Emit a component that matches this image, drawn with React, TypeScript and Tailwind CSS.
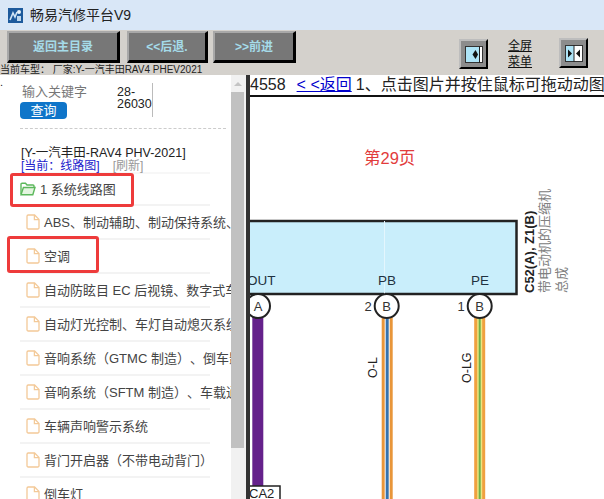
const cjk = "font-['Liberation_Sans','Noto_Sans_CJK_SC',sans-serif] [text-spacing-trim:space-all]";

function DocIcon() {
  return (
    <svg width="14" height="16" viewBox="0 0 14 16" className="shrink-0" fill="none" stroke="#f3c998" strokeWidth="1.3">
      <path d="M1 2.2A1.2 1.2 0 0 1 2.2 1H8.6L13 5.4V13.8A1.2 1.2 0 0 1 11.8 15H2.2A1.2 1.2 0 0 1 1 13.8Z" />
      <path d="M8.4 1V5.6H13" />
    </svg>
  );
}

function Row({ text }: { text: string }) {
  return (
    <div className="w-[190px] h-[34px] ml-[20px] border-b-2 border-[#f3f3f3] flex items-center pl-[6px] overflow-visible">
      <DocIcon />
      <span className="ml-[4px] text-[13px] text-[#444] whitespace-nowrap leading-none">{text}</span>
    </div>
  );
}

function ToolButton({ label, className }: { label: string; className: string }) {
  return (
    <div className={`h-[32px] bg-[#777] border-2 border-t-[#a8a8a8] border-l-[#a8a8a8] border-r-[3px] border-r-black border-b-[3px] border-b-black flex items-center justify-center text-[12px] font-bold text-[#a5dbe9] ${className}`}>
      {label}
    </div>
  );
}

function PanelIcon({ double }: { double?: boolean }) {
  return (
    <div className="w-[29px] h-[30px] bg-[#8c8c8c] border-2 border-t-[#bdbdbd] border-l-[#bdbdbd] border-r-black border-b-black flex items-center justify-center">
      <svg width="18" height="17" viewBox="0 0 18 17">
        <rect x="0.500" y="0.500" width="17" height="16" fill="#aee4f7" stroke="#333" strokeWidth="1" />
        {double ? (
          <>
            <rect x="9" y="1" width="8" height="15" fill="#fff" />
            <line x1="9" y1="0" x2="9" y2="17" stroke="#222" />
            <path d="M3 4.500L7 8.500L3 12.500Z M15 4.500L11 8.500L15 12.500Z" fill="#111" />
          </>
        ) : (
          <>
            <rect x="14" y="1" width="3" height="15" fill="#fff" />
            <line x1="14.500" y1="0" x2="14.500" y2="17" stroke="#222" />
            <path d="M10.500 4L7.500 8.500L10.500 13L13 8.500Z" fill="#111" />
          </>
        )}
      </svg>
    </div>
  );
}

function Diagram() {
  return (
    <svg width="354" height="402" viewBox="0 0 354 402" className="block" style={{ fontFamily: "'Liberation Sans','Noto Sans CJK SC',sans-serif" }}>
      <text x="114" y="67" fontSize="16.500" fill="#e23c3c">第29页</text>
      <rect x="-4" y="124" width="270.500" height="73" fill="#c9eefb" stroke="#222" strokeWidth="2.500" />
      <line x1="134.500" y1="124" x2="134.500" y2="197" stroke="#e4f6fd" />
      <text x="-3" y="188" fontSize="13.500" fill="#1f3140">OUT</text>
      <text x="128" y="188" fontSize="13.500" fill="#1f3140">PB</text>
      <text x="221" y="188" fontSize="13.500" fill="#1f3140">PE</text>

      <rect x="2.300" y="220" width="11" height="176" fill="#65218b" />
      <circle cx="8" cy="209" r="12" fill="#fff" stroke="#222" strokeWidth="2" />
      <text x="8" y="214" fontSize="13" textAnchor="middle" fill="#333">A</text>
      <rect x="-6" y="389" width="36" height="20" fill="#fff" stroke="#222" strokeWidth="1.500" />
      <text x="-1" y="401" fontSize="13" fill="#222">CA2</text>

      <rect x="131.700" y="220" width="11" height="182" fill="#e8963a" />
      <rect x="134.700" y="220" width="5" height="182" fill="#fff" />
      <rect x="135.700" y="220" width="3" height="182" fill="#3572ad" />
      <circle cx="136.700" cy="209" r="12" fill="#fff" stroke="#222" strokeWidth="2" />
      <text x="136.700" y="214" fontSize="13" textAnchor="middle" fill="#333">B</text>
      <text x="118" y="214" fontSize="13" textAnchor="middle" fill="#333">2</text>
      <text transform="translate(127 281) rotate(-90)" fontSize="12.500" fill="#222">O-L</text>

      <rect x="224.200" y="220" width="11" height="182" fill="#f0a040" />
      <rect x="227.200" y="220" width="5" height="182" fill="#ece580" />
      <rect x="228.700" y="220" width="2" height="182" fill="#6fb04a" />
      <circle cx="229.700" cy="209" r="12" fill="#fff" stroke="#222" strokeWidth="2" />
      <text x="229.700" y="214" fontSize="13" textAnchor="middle" fill="#333">B</text>
      <text x="211" y="214" fontSize="13" textAnchor="middle" fill="#333">1</text>
      <text transform="translate(221 286) rotate(-90)" fontSize="12.500" fill="#222">O-LG</text>

      <text transform="translate(284 196) rotate(-90)" fontSize="13" fontWeight="700" fill="#222">C52(A), Z1(B)</text>
      <text transform="translate(299 196) rotate(-90)" fontSize="13" fill="#808080">带电动机的压缩机</text>
      <text transform="translate(316 196) rotate(-90)" fontSize="13" fill="#808080">总成</text>
    </svg>
  );
}

export default function App() {
  const rows = [
    "ABS、制动辅助、制动保持系统、坡道起步辅助",
    "空调",
    "自动防眩目 EC 后视镜、数字式车内后视镜",
    "自动灯光控制、车灯自动熄灭系统、前照灯",
    "音响系统（GTMC 制造）、倒车影像监视系统",
    "音响系统（SFTM 制造）、车载通信系统",
    "车辆声响警示系统",
    "背门开启器（不带电动背门）",
    "倒车灯",
  ];
  return (
    <div className={`relative w-[604px] h-[499px] overflow-hidden bg-white flex flex-col ${cjk}`}>
      <div className="h-[30px] bg-[#d9e7f7] flex items-center pl-[8px] shrink-0">
        <svg width="15" height="15" viewBox="0 0 15 15">
          <rect width="15" height="15" fill="#1d5a9c" />
          <path d="M2 12L5 5L7 9L9 4" stroke="#cfe4f5" strokeWidth="1.600" fill="none" />
          <circle cx="11" cy="4" r="2" fill="#e8f2fa" />
          <path d="M9 13V8H13V13Z" fill="#bcd7ee" />
        </svg>
        <span className="ml-[7px] text-[14px] text-[#222] leading-none">畅易汽修平台V9</span>
      </div>

      <div className="h-[45px] bg-[#d4d1cc] relative shrink-0">
        <div className="flex items-start pl-[7px] pt-[1px]">
          <ToolButton label="返回主目录" className="w-[113px]" />
          <ToolButton label="<<后退." className="w-[81px] ml-[7px]" />
          <ToolButton label=">>前进" className="w-[83px] ml-[5px]" />
        </div>
        <div className="absolute left-0 top-[35px] text-[10px] leading-[10px] text-[#222] whitespace-nowrap">当前车型： 厂家:Y-一汽丰田RAV4 PHEV2021</div>
        <div className="absolute left-[459px] top-[9px]"><PanelIcon /></div>
        <div className="absolute left-[508px] top-[8px] text-[12px] leading-[16px] text-[#111] underline text-center">
          <div>全屏</div>
          <div>菜单</div>
        </div>
        <div className="absolute left-[559px] top-[8px]"><PanelIcon double /></div>
      </div>

      <div className="flex flex-1 min-h-0">
        <div className="w-[231px] overflow-hidden shrink-0">
          <div className="h-[54px] relative">
            <div className="absolute left-0 top-[0px] text-[11px] leading-[14px] text-[#222]">.</div>
            <div className="flex pt-[8px] pl-[22px]">
              <div className="w-[95px]">
                <div className="text-[13px] leading-[18px] text-[#777]">输入关键字</div>
                <div className="mt-[1px] -ml-[2px] w-[47px] h-[17px] rounded-[4px] bg-[#0f75c9] text-white text-[13px] leading-[17px] text-center">查询</div>
              </div>
              <div className="text-[12.500px] leading-[12px] text-[#222] pt-[3px] border-r border-[#bbb] h-[34px]">28-<br />26030</div>
            </div>
            <div className="absolute left-[20px] top-[53px] w-[206px] border-t border-dashed border-[#ccc]" />
          </div>
          <div className="pl-[21px] pt-[18px] h-[43px]">
            <div className="text-[12.500px] leading-[13px] text-[#222] whitespace-nowrap">[Y-一汽丰田-RAV4 PHV-2021]</div>
            <div className="text-[12px] leading-[13px] whitespace-nowrap">
              <span className="text-[#2222cc]">[当前：线路图]</span>
              <span className="ml-[13px] text-[#999]">[刷新]</span>
            </div>
          </div>
          <div className="w-[190px] h-[34px] ml-[20px] border-y-2 border-t-[#f7f7f7] border-b-[#f3f3f3] flex items-center">
            <svg width="16" height="14" viewBox="0 0 16 14" fill="none" stroke="#5cb85c" strokeWidth="1.400" className="shrink-0">
              <path d="M1 12V2.200A1 1 0 0 1 2 1.200H5.500L7 3H13A1 1 0 0 1 14 4V5.500" />
              <path d="M1 12.800L3.400 5.500H15L12.800 12.800Z" fill="#e4f5e0" />
            </svg>
            <span className="ml-[4px] text-[13px] text-[#444] whitespace-nowrap leading-none">1 系统线路图</span>
          </div>
          {rows.map((r) => <Row key={r} text={r} />)}
        </div>

        <div className="w-[15px] bg-[#f1f1f1] flex flex-col shrink-0">
          <div className="h-[17px] w-[13px] flex items-center justify-center">
            <div className="w-0 h-0 border-x-[4px] border-x-transparent border-b-[4px] border-b-[#c4c4c4]" />
          </div>
          <div className="h-[356px] w-[13px] bg-[#c1c1c1]" />
        </div>

        <div className="w-[4px] bg-[#333] shrink-0" />

        <div className="flex-1 min-w-0 overflow-hidden">
          <div className="h-[22px] border-b-2 border-[#111] flex items-center whitespace-nowrap text-[16px] leading-none text-[#222] overflow-hidden">
            <span>4558</span>
            <span className="ml-[11px] text-[#0000cc] underline">&lt; &lt;返回</span>
            <span className="ml-[4px]">1、点击图片并按住鼠标可拖动动图</span>
          </div>
          <Diagram />
        </div>
      </div>

      <div className="absolute left-[10px] top-[173px] w-[124px] h-[34px] border-[3px] border-[#ee3b3b] rounded-[3px]" />
      <div className="absolute left-[7px] top-[236px] w-[92px] h-[37px] border-[3px] border-[#ee3b3b] rounded-[3px]" />
    </div>
  );
}
